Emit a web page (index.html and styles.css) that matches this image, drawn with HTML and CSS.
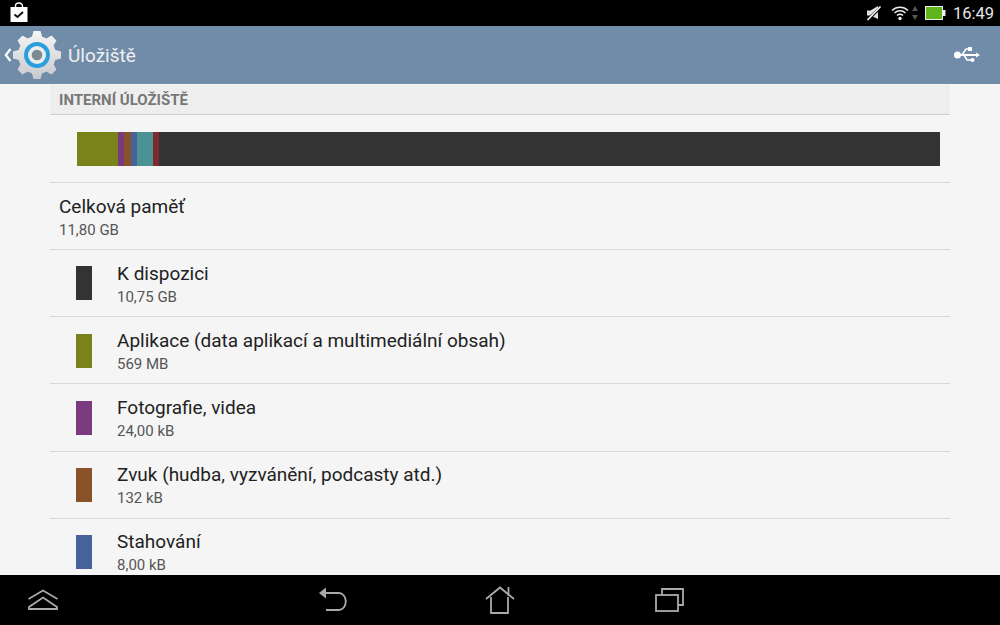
FILE: index.html
```html
<!DOCTYPE html>
<html lang="en">
<head>
  <meta charset="UTF-8">
  <title>Úložiště</title>
  <link rel="stylesheet" href="styles.css">
</head>
<body>
  <div class="status-bar">
    <svg class="bag-icon" width="18" height="20" viewBox="0 0 18 20">
      <path d="M5.500 6V4a3.500 3 0 0 1 7 0v2" fill="none" stroke="#fff" stroke-width="1.400"/>
      <rect x="0.500" y="5" width="17" height="15" fill="#fff"/>
      <path d="M4.500 12.500l3 2.500 5.500-5" fill="none" stroke="#111" stroke-width="2"/>
    </svg>
    <div class="status-right">
      <svg width="16" height="16" viewBox="0 0 16 16">
        <path d="M1 5.500h3.500L12 1v13L4.500 10.500H1z" fill="#e0e0e0"/>
        <path d="M1 15.500L15 2" stroke="#000" stroke-width="3"/>
        <path d="M1.500 15L14.500 1.500" stroke="#f2f2f2" stroke-width="1.800"/>
      </svg>
      <svg class="wifi" width="18" height="16" viewBox="0 0 18 16">
        <path d="M1 5.500a11.500 11.500 0 0 1 16 0M3.500 8a8 8 0 0 1 11 0M6 10.500a4.400 4.400 0 0 1 6 0" fill="none" stroke="#eee" stroke-width="1.500"/>
        <circle cx="9" cy="13.500" r="1.700" fill="#eee"/>
      </svg>
      <svg class="updown" width="6" height="14" viewBox="0 0 6 14">
        <path d="M3 0l3 5H0z" fill="#555"/>
        <path d="M3 14l3-5H0z" fill="#555"/>
      </svg>
      <svg class="battery" width="21" height="14" viewBox="0 0 21 14">
        <rect x="0.500" y="0.500" width="17" height="13" fill="#5fb41c" stroke="#eee"/>
        <rect x="18" y="4" width="2.500" height="6" fill="#eee"/>
      </svg>
      <span class="clock">16:49</span>
    </div>
  </div>

  <div class="action-bar">
    <svg class="back" width="8" height="14" viewBox="0 0 8 14">
      <path d="M6.500 1L1.800 7l4.700 6" fill="none" stroke="#fff" stroke-width="2.200"/>
    </svg>
    <svg class="gear" width="48" height="50" viewBox="0 0 48 50">
      <defs>
        <linearGradient id="gearFill" x1="0" y1="0" x2="0" y2="1">
          <stop offset="0" stop-color="#f6f6f6"/>
          <stop offset="1" stop-color="#c6c9cd"/>
        </linearGradient>
        <clipPath id="gearShape">
          <circle cx="24" cy="25" r="19"/>
          <path id="gearTooth" d="M20.500 1h7l2.500 9H18z"/>
          <path d="M20.500 1h7l2.500 9H18z" transform="rotate(45 24 25)"/>
          <path d="M20.500 1h7l2.500 9H18z" transform="rotate(90 24 25)"/>
          <path d="M20.500 1h7l2.500 9H18z" transform="rotate(135 24 25)"/>
          <path d="M20.500 1h7l2.500 9H18z" transform="rotate(180 24 25)"/>
          <path d="M20.500 1h7l2.500 9H18z" transform="rotate(225 24 25)"/>
          <path d="M20.500 1h7l2.500 9H18z" transform="rotate(270 24 25)"/>
          <path d="M20.500 1h7l2.500 9H18z" transform="rotate(315 24 25)"/>
        </clipPath>
      </defs>
      <rect width="48" height="50" fill="url(#gearFill)" clip-path="url(#gearShape)"/>
      <circle cx="24" cy="25" r="13" fill="#2b9fdc"/>
      <circle cx="24" cy="25" r="9" fill="#ececec"/>
      <circle cx="24" cy="25" r="5.300" fill="#7c8a94"/>
    </svg>
    <span class="title">Úložiště</span>
    <svg class="usb" width="26" height="18" viewBox="0 0 26 18">
      <g fill="#fff">
        <circle cx="3.500" cy="9" r="3.500"/>
        <rect x="3" y="8" width="20" height="2"/>
        <path d="M26 9l-4-2.500v5z"/>
        <rect x="14" y="1" width="4" height="4"/>
      </g>
      <path d="M8 9l4-6h3M10 9l3 5h4" fill="none" stroke="#fff" stroke-width="1.600"/>
      <circle cx="18.500" cy="14" r="2" fill="#fff"/>
    </svg>
  </div>

  <div class="content">
    <div class="panel">
      <div class="section-head">INTERNÍ ÚLOŽIŠTĚ</div>
      <div class="usage">
        <div class="usage-bar">
          <div class="seg olive" style="width:41px"></div>
          <div class="seg purple" style="width:6px"></div>
          <div class="seg brown" style="width:7px"></div>
          <div class="seg blue" style="width:6px"></div>
          <div class="seg teal" style="width:16px"></div>
          <div class="seg red" style="width:6px"></div>
        </div>
      </div>
      <div class="row">
        <div class="name">Celková paměť</div>
        <div class="value">11,80 GB</div>
      </div>
      <div class="row keyed">
        <div class="swatch dark"></div>
        <div>
          <div class="name">K dispozici</div>
          <div class="value">10,75 GB</div>
        </div>
      </div>
      <div class="row keyed">
        <div class="swatch olive"></div>
        <div>
          <div class="name">Aplikace (data aplikací a multimediální obsah)</div>
          <div class="value">569 MB</div>
        </div>
      </div>
      <div class="row keyed">
        <div class="swatch purple"></div>
        <div>
          <div class="name">Fotografie, videa</div>
          <div class="value">24,00 kB</div>
        </div>
      </div>
      <div class="row keyed">
        <div class="swatch brown"></div>
        <div>
          <div class="name">Zvuk (hudba, vyzvánění, podcasty atd.)</div>
          <div class="value">132 kB</div>
        </div>
      </div>
      <div class="row keyed">
        <div class="swatch blue"></div>
        <div>
          <div class="name">Stahování</div>
          <div class="value">8,00 kB</div>
        </div>
      </div>
    </div>
  </div>

  <div class="nav-bar">
    <svg class="nav-menu" width="32" height="22" viewBox="0 0 32 22">
      <path d="M1.500 10L16 1.500 30.500 10" fill="none" stroke="#aaa" stroke-width="1.600"/>
      <path d="M2 18L16 8.500 30 18v2H2z" fill="none" stroke="#aaa" stroke-width="1.800"/>
    </svg>
    <svg class="nav-back" width="30" height="26" viewBox="0 0 30 26">
      <path d="M1 6l7-5.500v11z" fill="#aaa"/>
      <path d="M7 6h14a6.800 8.500 0 0 1 0 17H8" fill="none" stroke="#aaa" stroke-width="1.800"/>
    </svg>
    <svg class="nav-home" width="30" height="28" viewBox="0 0 30 28">
      <path d="M1 13L15 1.500 29 13" fill="none" stroke="#aaa" stroke-width="1.800"/>
      <path d="M6 11v16h17V11M23.500 1v9" fill="none" stroke="#aaa" stroke-width="1.800"/>
    </svg>
    <svg class="nav-recent" width="30" height="26" viewBox="0 0 30 26">
      <rect x="1" y="8" width="22" height="16" fill="none" stroke="#aaa" stroke-width="1.800"/>
      <path d="M7 8V2h21v16h-5" fill="none" stroke="#aaa" stroke-width="1.800"/>
    </svg>
  </div>
</body>
</html>
```

FILE: styles.css
```css
html, body {
  margin: 0;
  padding: 0;
}
body {
  width: 1000px;
  height: 625px;
  display: flex;
  flex-direction: column;
  overflow: hidden;
  font-family: Roboto, "Liberation Sans", sans-serif;
  background: #f5f5f5;
}
.status-bar {
  height: 26px;
  flex: none;
  background: #000;
  display: flex;
  align-items: center;
  justify-content: space-between;
  padding: 0 6px 0 10px;
}
.bag-icon {
  margin-top: -3px;
}
.status-right {
  display: flex;
  align-items: center;
}
.wifi {
  margin-left: 9px;
}
.updown {
  margin-left: 3px;
}
.battery {
  margin-left: 7px;
}
.clock {
  margin-left: 7px;
  color: #e6e6e6;
  font-size: 16.5px;
}
.action-bar {
  height: 58px;
  flex: none;
  background: #708ca8;
  display: flex;
  align-items: center;
  padding: 0 20px 0 4px;
}
.back {
  margin-right: 1px;
}
.gear {
  flex: none;
}
.title {
  margin-left: 7px;
  flex: 1;
  color: #f0f0f0;
  font-size: 19px;
}
.content {
  flex: 1;
  min-height: 0;
  overflow: hidden;
}
.panel {
  width: 900px;
  margin: 0 auto;
}
.section-head {
  height: 30px;
  box-sizing: border-box;
  margin-top: 1px;
  padding-left: 9px;
  display: flex;
  align-items: center;
  background: #eee;
  border-bottom: 1px solid #d0d0d0;
  color: #777;
  font-size: 15px;
  font-weight: bold;
}
.usage {
  height: 67px;
  box-sizing: border-box;
  padding: 17px 10px 0 27px;
}
.usage-bar {
  height: 34px;
  display: flex;
  background: #333;
}
.seg {
  height: 100%;
}
.olive { background: #7a8319; }
.purple { background: #7a3a80; }
.brown { background: #8a5228; }
.blue { background: #47639a; }
.teal { background: #4a9294; }
.red { background: #7f2a2e; }
.dark { background: #333; }
.row {
  height: 67.15px;
  box-sizing: border-box;
  border-top: 1px solid #d8d8d8;
  padding: 12.6px 0 0 9px;
}
.keyed {
  display: flex;
  padding-left: 26px;
}
.swatch {
  width: 16px;
  height: 34px;
  margin: 3.7px 25px 0 0;
  flex: none;
}
.name {
  color: #222;
  font-size: 19px;
  line-height: 22px;
}
.value {
  margin-top: 3px;
  color: #555;
  font-size: 15px;
  line-height: 18px;
}
.nav-bar {
  height: 50px;
  flex: none;
  background: #000;
  display: flex;
  align-items: center;
  padding-left: 27px;
}
.nav-back {
  margin-left: 259px;
}
.nav-home {
  margin-left: 137px;
}
.nav-recent {
  margin-left: 140px;
}
```
